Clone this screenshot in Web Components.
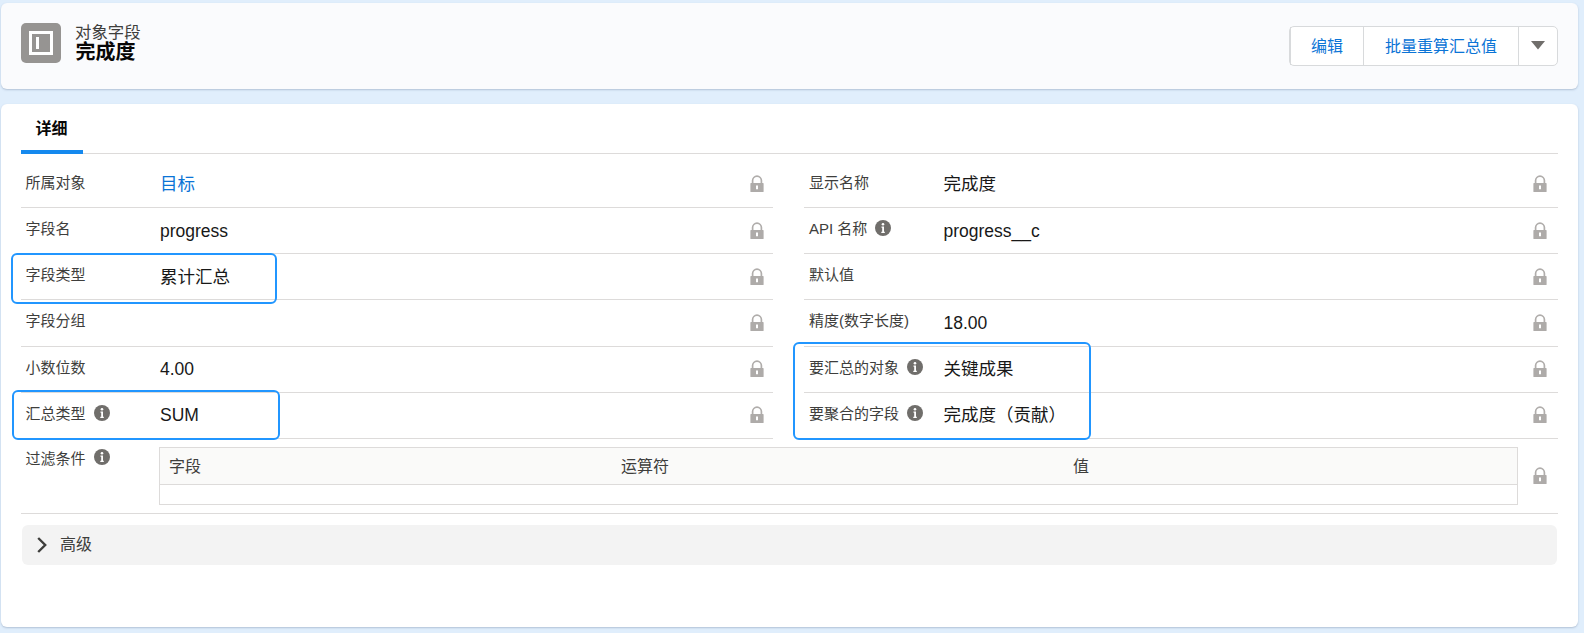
<!DOCTYPE html>
<html lang="zh">
<head>
<meta charset="utf-8">
<title>完成度</title>
<style>
  html, body { margin: 0; height: 100%; }
  body {
    background: #e0eefc;
    font-family: "Liberation Sans", "Noto Sans CJK SC", sans-serif;
    color: #181818;
    overflow: hidden;
  }
</style>
</head>
<body>
<field-page>
  <record-header slot="header" kicker="对象字段" title="完成度">
    <action-group></action-group>
  </record-header>

  <detail-card>
    <field-grid>
      <field-row label="所属对象" value="目标" link></field-row>
      <field-row label="显示名称" value="完成度"></field-row>
      <field-row label="字段名" value="progress"></field-row>
      <field-row label="API 名称" value="progress__c" info></field-row>
      <field-row label="字段类型" value="累计汇总"></field-row>
      <field-row label="默认值"></field-row>
      <field-row label="字段分组"></field-row>
      <field-row label="精度(数字长度)" value="18.00"></field-row>
      <field-row label="小数位数" value="4.00"></field-row>
      <field-row label="要汇总的对象" value="关键成果" info></field-row>
      <field-row label="汇总类型" value="SUM" info></field-row>
      <field-row label="要聚合的字段" value="完成度（贡献）" info></field-row>
      <mark-box style="left:-10px;top:99px;width:262px;height:47px"></mark-box>
      <mark-box style="left:-9px;top:236px;width:264px;height:46px"></mark-box>
      <mark-box style="left:772px;top:188px;width:294px;height:94px"></mark-box>
    </field-grid>
    <filter-row></filter-row>
    <advanced-bar></advanced-bar>
  </detail-card>
</field-page>

<script>
const LOCK = `<svg width="16" height="18" viewBox="0 0 16 18" aria-hidden="true">
  <path d="M3.6 8V5.6a4.4 4.4 0 0 1 8.8 0V8" fill="none" stroke="#b0adab" stroke-width="1.7"/>
  <path d="M2 8h12a.6.6 0 0 1 .6.6v7.8a.6.6 0 0 1-.6.6H2a.6.6 0 0 1-.6-.6V8.600A.6.6 0 0 1 2 8z" fill="#aeaba9"/>
  <path d="M7 10.600h2v3.600H7z" fill="#fff"/>
</svg>`;

class FieldPage extends HTMLElement {
  connectedCallback() {
    this.attachShadow({ mode: "open" });
    this.shadowRoot.innerHTML = `
      <style>
        :host {
          display: flex;
          flex-direction: column;
          gap: 15px;
          box-sizing: border-box;
          height: 633px;
          padding: 3px 6px 6px 1px;
        }
      </style>
      <slot name="header"></slot>
      <slot></slot>
    `;
  }
}

class RecordHeader extends HTMLElement {
  connectedCallback() {
    this.attachShadow({ mode: "open" });
    this.shadowRoot.innerHTML = `
      <style>
        :host {
          display: flex;
          align-items: flex-start;
          box-sizing: border-box;
          height: 86px;
          padding: 20px 20px 0;
          background: #fafbfd;
          border-radius: 6px;
          box-shadow: 0 1px 2px rgba(90, 110, 140, 0.35);
        }
        .icon {
          flex: none;
          width: 40px;
          height: 40px;
          margin-right: 14px;
        }
        .titles { flex: 1; }
        .kicker {
          font-size: 16.4px;
          line-height: 20px;
          margin-top: -1px;
          color: #3e3e3c;
        }
        .title {
          font-size: 20px;
          font-weight: 700;
          line-height: 20px;
          margin-left: 0.5px;
          color: #080707;
        }
        ::slotted(action-group) { margin: 3px 0 0; }
      </style>
      <svg class="icon" viewBox="0 0 40 40" aria-hidden="true">
        <rect width="40" height="40" rx="5" fill="#969492"/>
        <rect x="9.500" y="9.500" width="21" height="21" fill="none" stroke="#fff" stroke-width="3"/>
        <rect x="15" y="14" width="3" height="12" fill="#fff"/>
      </svg>
      <div class="titles">
        <div class="kicker">${this.getAttribute("kicker")}</div>
        <div class="title">${this.getAttribute("title")}</div>
      </div>
      <slot></slot>
    `;
  }
}

class ActionGroup extends HTMLElement {
  connectedCallback() {
    this.attachShadow({ mode: "open" });
    this.shadowRoot.innerHTML = `
      <style>
        :host {
          display: flex;
          box-sizing: border-box;
          height: 40px;
          background: #fff;
          border: 1px solid #d8dadc;
          border-radius: 5px;
          color: #0b74d6;
          font-size: 16px;
        }
        div {
          display: flex;
          align-items: center;
          justify-content: center;
          box-sizing: border-box;
          padding-bottom: 2px;
          border-left: 1px solid #d8dadc;
        }
        div:first-child { border-left: 0; }
        .edit { width: 73px; }
        .batch { width: 155px; }
        .more { width: 39px; }
      </style>
      <div class="edit">编辑</div>
      <div class="batch">批量重算汇总值</div>
      <div class="more">
        <svg width="14" height="9" viewBox="0 0 14 9" aria-hidden="true"><path d="M0 0h14L7 8.500z" fill="#706e6b"/></svg>
      </div>
    `;
  }
}

class DetailCard extends HTMLElement {
  connectedCallback() {
    this.attachShadow({ mode: "open" });
    this.shadowRoot.innerHTML = `
      <style>
        :host {
          display: block;
          box-sizing: border-box;
          height: 523px;
          padding: 0 20px;
          background: #fff;
          border-radius: 6px;
          box-shadow: 0 1px 2px rgba(90, 110, 140, 0.35);
        }
        .tabs {
          height: 49px;
          border-bottom: 1px solid #dddbda;
          display: flex;
        }
        .tab {
          box-sizing: border-box;
          width: 62px;
          height: 50px;
          padding: 14px 0 0 14.500px;
          font-size: 16px;
          font-weight: 700;
          line-height: 22px;
          color: #080707;
          border-bottom: 4px solid #1589ee;
        }
      </style>
      <div class="tabs"><div class="tab">详细</div></div>
      <slot></slot>
    `;
  }
}

class FieldGrid extends HTMLElement {
  connectedCallback() {
    this.attachShadow({ mode: "open" });
    this.shadowRoot.innerHTML = `
      <style>
        :host {
          display: grid;
          position: relative;
          grid-template-columns: 752px 754px;
          column-gap: 31px;
          padding-top: 7.800px;
        }
      </style>
      <slot></slot>
    `;
  }
}

class FieldRow extends HTMLElement {
  connectedCallback() {
    const value = this.getAttribute("value") || "";
    this.attachShadow({ mode: "open" });
    this.shadowRoot.innerHTML = `
      <style>
        :host {
          display: flex;
          align-items: center;
          box-sizing: border-box;
          height: 46.200px;
          padding: 0 8px 0 4.500px;
          border-bottom: 1px solid #dddbda;
        }
        :host(:nth-child(even)) { padding: 0 10px 0 5px; }
        .label {
          display: flex;
          align-items: center;
          flex: none;
          width: 134.500px;
          font-size: 15px;
          line-height: 20px;
          color: #3e3e3c;
          margin-top: -3px;
        }
        .value {
          flex: 1;
          font-size: 17.500px;
          line-height: 24px;
          color: #181818;
        }
        .value.link { color: #0b74d6; }
        info-dot { margin-left: 8px; }
        svg { display: block; flex: none; }
      </style>
      <div class="label">${this.getAttribute("label")}${this.hasAttribute("info") ? "<info-dot></info-dot>" : ""}</div>
      <div class="value${this.hasAttribute("link") ? " link" : ""}">${value}</div>
      ${LOCK}
    `;
  }
}

class InfoDot extends HTMLElement {
  connectedCallback() {
    this.attachShadow({ mode: "open" });
    this.shadowRoot.innerHTML = `
      <style>
        :host { display: inline-flex; flex: none; width: 16px; height: 16px; margin-top: -2px; }
      </style>
      <svg width="16" height="16" viewBox="0 0 16 16" aria-hidden="true">
        <circle cx="8" cy="8" r="8" fill="#706e6b"/>
        <circle cx="8" cy="4.200" r="1.300" fill="#fff"/>
        <path d="M6.500 6.500h2.500v5.200h.8v1.200H6.300v-1.200h.9V7.700h-.7z" fill="#fff"/>
      </svg>
    `;
  }
}

class MarkBox extends HTMLElement {
  connectedCallback() {
    this.attachShadow({ mode: "open" });
    this.shadowRoot.innerHTML = `
      <style>
        :host {
          display: block;
          position: absolute;
          box-sizing: content-box;
          border: 2px solid #2196ff;
          border-radius: 6px;
          pointer-events: none;
        }
      </style>
    `;
  }
}

class FilterRow extends HTMLElement {
  connectedCallback() {
    this.attachShadow({ mode: "open" });
    this.shadowRoot.innerHTML = `
      <style>
        :host {
          display: flex;
          align-items: flex-start;
          box-sizing: border-box;
          height: 75px;
          padding: 8px 0 0 4.500px;
          border-bottom: 1px solid #dddbda;
        }
        .label {
          display: flex;
          align-items: center;
          flex: none;
          width: 133.500px;
          height: 20px;
          margin-top: 1px;
          font-size: 15px;
          color: #3e3e3c;
        }
        info-dot { margin-left: 8px; }
        .table {
          flex: none;
          box-sizing: border-box;
          width: 1359px;
          height: 58px;
          border: 1px solid #dddbda;
        }
        .head {
          display: grid;
          grid-template-columns: repeat(3, 452px);
          box-sizing: border-box;
          height: 37px;
          padding: 0 0 2px 9px;
          align-items: center;
          background: #fafaf9;
          border-bottom: 1px solid #dddbda;
          font-size: 16px;
          color: #3e3e3c;
        }
        svg { display: block; flex: none; margin: 20px 0 0 14px; }
      </style>
      <div class="label">过滤条件<info-dot></info-dot></div>
      <div class="table">
        <div class="head"><span>字段</span><span>运算符</span><span>值</span></div>
      </div>
      ${LOCK}
    `;
  }
}

class AdvancedBar extends HTMLElement {
  connectedCallback() {
    this.attachShadow({ mode: "open" });
    this.shadowRoot.innerHTML = `
      <style>
        :host {
          display: flex;
          align-items: center;
          box-sizing: border-box;
          height: 40px;
          width: 1535px;
          margin: 11px 0 0 1px;
          padding-left: 15px;
          background: #f3f3f3;
          border-radius: 6px;
          font-size: 16px;
          color: #3e3e3c;
        }
        svg { margin-right: 13px; }
        span { margin-bottom: 3px; }
      </style>
      <svg width="10" height="16" viewBox="0 0 10 16" aria-hidden="true">
        <path d="M1.200 1l7 7-7 7" fill="none" stroke="#3e3e3c" stroke-width="2.400"/>
      </svg>
      <span>高级</span>
    `;
  }
}

customElements.define("field-page", FieldPage);
customElements.define("record-header", RecordHeader);
customElements.define("action-group", ActionGroup);
customElements.define("detail-card", DetailCard);
customElements.define("field-grid", FieldGrid);
customElements.define("field-row", FieldRow);
customElements.define("info-dot", InfoDot);
customElements.define("mark-box", MarkBox);
customElements.define("filter-row", FilterRow);
customElements.define("advanced-bar", AdvancedBar);
</script>
</body>
</html>
